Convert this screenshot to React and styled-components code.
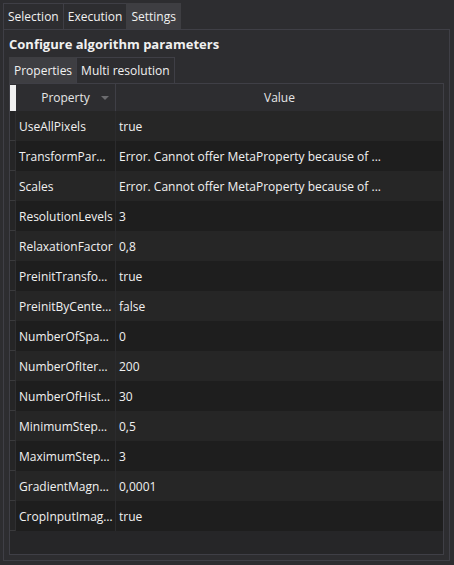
import React from 'react'
import styled, { createGlobalStyle } from 'styled-components'

const GlobalStyle = createGlobalStyle`
  html, body {
    margin: 0;
    padding: 0;
    background: #2d2d30;
  }
  body {
    font-family: "Open Sans", "Noto Sans", "DejaVu Sans", sans-serif;
    font-size: 12px;
    color: #f1f1f1;
  }
`;

const Window = styled.div`
  width: 454px;
  height: 565px;
  box-sizing: border-box;
  padding: 3px 4px 4px 3px;
  display: flex;
  flex-direction: column;
  background: #2d2d30;
`;

const TabBar = styled.div`
  display: flex;
  height: 26px;
`;

const Tab = styled.div`
  box-sizing: border-box;
  height: 26px;
  padding: 0 4px;
  display: flex;
  align-items: center;
  border: 1px solid ${p => (p.$active ? '#3e3e42' : '#3f3f46')};
  border-bottom: none;
  margin-right: -1px;
  background: ${p => (p.$active ? '#3e3e42' : '#2d2d30')};
  color: #f1f1f1;
  white-space: nowrap;
`;

const Panel = styled.div`
  flex: 1;
  border: 1px solid #3f3f46;
  padding: 0 5px 5px 5px;
  display: flex;
  flex-direction: column;
  min-height: 0;
`;

const Title = styled.div`
  font-weight: bold;
  font-size: 13px;
  height: 27px;
  line-height: 29px;
  white-space: nowrap;
`;

const InnerTabBar = styled.div`
  display: flex;
  height: 26px;
`;

const Content = styled.div`
  flex: 1;
  border: 1px solid #3f3f46;
  background: #262628;
  display: flex;
  flex-direction: column;
  min-height: 0;
`;

const HeaderRow = styled.div`
  display: grid;
  grid-template-columns: 6px 100px 1fr;
  height: 27px;
  background: #2d2d30;
`;

const Corner = styled.div`
  background: #f0f0f0;
  margin: 1px 0 0 0;
`;

const HeaderCell = styled.div`
  position: relative;
  display: flex;
  align-items: center;
  justify-content: center;
  border-right: ${p => (p.$last ? 'none' : '1px solid #3f3f46')};
  color: #e6e6e6;
`;

const SortArrow = styled.span`
  position: absolute;
  right: 6px;
  top: 12px;
  width: 0;
  height: 0;
  border-left: 4px solid transparent;
  border-right: 4px solid transparent;
  border-top: 4px solid #6b6b6e;
`;

const Row = styled.div`
  display: grid;
  grid-template-columns: 6px 100px 1fr;
  height: 30px;
  background: ${p => (p.$odd ? '#1e1e1e' : '#262626')};
`;

const RowHead = styled.div`
  background: #252526;
  border-bottom: 1px solid #3a3a3c;
  border-right: 1px solid #2f2f31;
  box-sizing: border-box;
`;

const Cell = styled.div`
  display: flex;
  align-items: center;
  padding: 0 1px 0 3px;
  min-width: 0;
  overflow: hidden;
  white-space: nowrap;
  border-right: ${p => (p.$name ? '1px solid #2b2b2d' : 'none')};
  color: #f1f1f1;
`;

const ERR = 'Error. Cannot offer MetaProperty because of ...'

const props = [
  ['UseAllPixels', 'true'],
  ['TransformPar…', ERR],
  ['Scales', ERR],
  ['ResolutionLevels', '3'],
  ['RelaxationFactor', '0,8'],
  ['PreinitTransfo…', 'true'],
  ['PreinitByCente…', 'false'],
  ['NumberOfSpa…', '0'],
  ['NumberOfIter…', '200'],
  ['NumberOfHist…', '30'],
  ['MinimumStep…', '0,5'],
  ['MaximumStep…', '3'],
  ['GradientMagn…', '0,0001'],
  ['CropInputImag…', 'true'],
]

const App = () => {
  return (
    <>
      <GlobalStyle />
      <Window>
        <TabBar>
          <Tab>Selection</Tab>
          <Tab>Execution</Tab>
          <Tab $active>Settings</Tab>
        </TabBar>
        <Panel>
          <Title>Configure algorithm parameters</Title>
          <InnerTabBar>
            <Tab $active>Properties</Tab>
            <Tab>Multi resolution</Tab>
          </InnerTabBar>
          <Content>
            <HeaderRow>
              <Corner />
              <HeaderCell>
                Property
                <SortArrow />
              </HeaderCell>
              <HeaderCell $last>Value</HeaderCell>
            </HeaderRow>
            {props.map(([name, value], i) => (
              <Row key={name} $odd={i % 2 === 1}>
                <RowHead />
                <Cell $name>{name}</Cell>
                <Cell>{value}</Cell>
              </Row>
            ))}
          </Content>
        </Panel>
      </Window>
    </>
  )
}

export default App
